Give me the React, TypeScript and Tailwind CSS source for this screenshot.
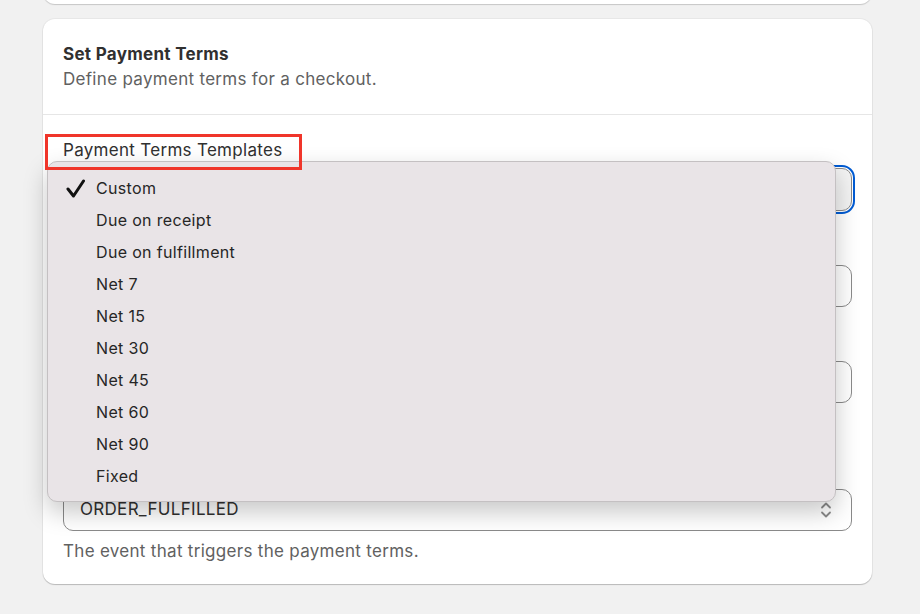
import React from "react";

const options = [
  "Custom",
  "Due on receipt",
  "Due on fulfillment",
  "Net 7",
  "Net 15",
  "Net 30",
  "Net 45",
  "Net 60",
  "Net 90",
  "Fixed",
];

// fields that sit under the open menu: only their right edges show
const HiddenField = ({ help }: { help?: boolean }) => (
  <div className="flex flex-col">
    <div className="h-[24px] mb-[6px]" />
    <div className="h-[42px] rounded-[10px] border border-[#8a8a8a] bg-white" />
    {help && <div className="h-[24px] mt-[8px]" />}
  </div>
);

export default function App() {
  return (
    <div
      className="relative w-[920px] h-[614px] overflow-hidden bg-[#f1f1f1] px-[43px] tracking-[0.3px]"
      style={{ fontFamily: "Inter, 'Noto Sans', sans-serif" }}
    >
      <div className="-mt-[16px] h-[20px] w-[829px] rounded-b-[12px] bg-white shadow-[0_1px_1px_rgba(0,0,0,0.18)]" />

      <div className="relative mt-[15px] w-[829px] h-[565px] rounded-[12px] bg-white shadow-[0_1px_1px_rgba(0,0,0,0.2),0_0_0_1px_rgba(0,0,0,0.04)]">
        <div className="px-5 pt-[23px] pb-[23px] border-b border-[#e6e6e6]">
          <div className="text-[17px] font-bold text-[#303030] leading-[24px]">Set Payment Terms</div>
          <div className="mt-[1px] text-[17px] text-[#616161] leading-[24px]">Define payment terms for a checkout.</div>
        </div>

        <div className="px-5 pt-[23px] flex flex-col gap-[24px]">
          <div className="flex flex-col">
            <div className="h-[24px] mb-[6px] text-[17px] text-[#303030] leading-[24px]">Payment Terms Templates</div>
            <div className="h-[43px] rounded-[10px] border border-[#8a8a8a] bg-[#f3f3f3] outline-2 outline-[#005bd3] outline-offset-[1px]" />
          </div>
          <HiddenField />
          <HiddenField help />
          <div className="flex flex-col">
            <div className="h-[24px] mb-[6px]" />
            <div className="h-[42px] rounded-[10px] border border-[#8a8a8a] bg-white flex items-center justify-between pl-4 pr-[19px] text-[17px] text-[#303030]">
              <span>ORDER_FULFILLED</span>
              <svg width="12" height="18" viewBox="0 0 12 18" fill="none" stroke="#8a8a8a" strokeWidth="1.8" strokeLinecap="round" strokeLinejoin="round">
                <path d="M2 6.5 L6 2.5 L10 6.5" />
                <path d="M2 11.5 L6 15.5 L10 11.5" />
              </svg>
            </div>
            <div className="mt-[8px] text-[17px] text-[#616161] leading-[24px]">The event that triggers the payment terms.</div>
          </div>
        </div>
      </div>

      <div className="absolute left-[47px] top-[161px] w-[789px] h-[341px] rounded-[10px] border border-[#c4c0c2] bg-[#e9e4e7] shadow-[0_10px_24px_rgba(0,0,0,0.22)] pt-[10px] tracking-[0.33px]">
        {options.map((o, i) => (
          <div key={o} className="h-[32px] flex items-center text-[16px] text-[#262626]">
            <div className="w-[48px] flex justify-end pr-[11px]">
              {i === 0 && (
                <svg width="19" height="19" viewBox="0 0 19 19" fill="none" stroke="#111" strokeWidth="3" strokeLinecap="round" strokeLinejoin="round">
                  <path d="M2 10 L7.5 17 L17.5 2" />
                </svg>
              )}
            </div>
            <span>{o}</span>
          </div>
        ))}
      </div>

      <div className="absolute left-[45px] top-[134px] w-[257px] h-[36px] border-[3px] border-[#f0352a] z-10" />
    </div>
  );
}
